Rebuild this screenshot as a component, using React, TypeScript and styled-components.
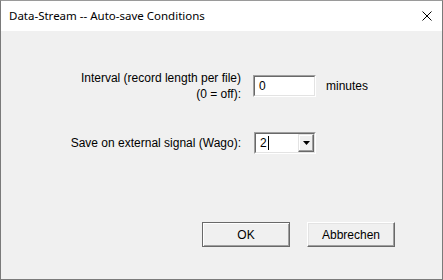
import React from 'react'
import styled, { createGlobalStyle } from 'styled-components'

const GlobalStyle = createGlobalStyle`
  html, body {
    margin: 0;
    padding: 0;
    background: #ffffff;
  }
`

const Window = styled.div`
  width: 443px;
  height: 280px;
  box-sizing: border-box;
  border: 1px solid #7a7a7a;
  border-top-color: #9a9a9a;
  display: flex;
  flex-direction: column;
  background: #f0f0f0;
  font-family: 'Liberation Sans', Arial, sans-serif;
  font-size: 12px;
  color: #000;
`

const TitleBar = styled.div`
  height: 30px;
  flex: none;
  background: #ffffff;
  display: flex;
  align-items: center;
  justify-content: space-between;
  padding: 0 10px 0 8px;
`

const Title = styled.span`
  font-family: 'Noto Sans', 'Open Sans', sans-serif;
  font-size: 11.5px;
  color: #000;
  margin-top: -1px;
`

const CloseIcon = styled.svg`
  width: 10px;
  height: 10px;
  display: block;
`

const Body = styled.div`
  flex: 1;
  display: flex;
  flex-direction: column;
  padding-top: 39px;
`

const Form = styled.div`
  display: grid;
  grid-template-columns: 240px auto auto;
  justify-content: start;
  column-gap: 12px;
  row-gap: 30px;
  align-items: center;
  justify-items: start;
`

const Label = styled.div`
  justify-self: end;
  text-align: right;
  line-height: 16px;
`

const Field = styled.div<{ $inset?: number }>`
  height: 22px;
  margin-left: ${p => p.$inset ?? 0}px;
  box-sizing: border-box;
  background: #ffffff;
  border: 1px solid;
  border-color: #a0a0a0 #ffffff #ffffff #a0a0a0;
  display: flex;
  align-items: stretch;
`

const FieldInner = styled.div<{ $w: number }>`
  width: ${p => p.$w}px;
  box-sizing: border-box;
  border: 1px solid;
  border-color: #696969 #e3e3e3 #e3e3e3 #696969;
  display: flex;
  align-items: stretch;
  font-size: 12px;
`

const Value = styled.span`
  flex: 1;
  display: flex;
  align-items: center;
  padding-left: 4px;
`

const Caret = styled.span`
  width: 1px;
  height: 14px;
  background: #000;
  margin-left: 1px;
`

const DropButton = styled.div`
  flex: none;
  width: 16px;
  box-sizing: border-box;
  background: #f0f0f0;
  border: 1px solid;
  border-color: #e3e3e3 #696969 #696969 #e3e3e3;
  box-shadow: inset -1px -1px 0 #a0a0a0, inset 1px 1px 0 #ffffff;
  display: flex;
  align-items: center;
  justify-content: center;
`

const Unit = styled.span`
  margin-left: -2px;
`

const ButtonRow = styled.div`
  display: flex;
  justify-content: flex-end;
  gap: 17px;
  padding-right: 47px;
  margin-top: 68px;
`

const Button = styled.div<{ $default?: boolean }>`
  width: 88px;
  height: 25px;
  box-sizing: border-box;
  display: flex;
  align-items: center;
  justify-content: center;
  background: #f0f0f0;
  border: 1px solid;
  border-color: ${p => (p.$default ? '#696969' : '#ffffff #696969 #696969 #ffffff')};
  box-shadow: ${p =>
    p.$default
      ? 'inset 1px 1px 0 #ffffff, inset -1px -1px 0 #a0a0a0'
      : 'inset -1px -1px 0 #a0a0a0, inset 1px 1px 0 #e3e3e3'};
  font-size: 12px;
`

export default function App() {
  return (
    <>
      <GlobalStyle />
      <Window>
        <TitleBar>
          <Title>Data-Stream -- Auto-save Conditions</Title>
          <CloseIcon viewBox="0 0 10 10">
            <path d="M0.5 0.5 L9.5 9.5 M9.5 0.5 L0.5 9.5" stroke="#000" strokeWidth="1" />
          </CloseIcon>
        </TitleBar>
        <Body>
          <Form>
            <Label>
              Interval (record length per file)
              <br />
              (0 = off):
            </Label>
            <Field>
              <FieldInner $w={61}>
                <Value>0</Value>
              </FieldInner>
            </Field>
            <Unit>minutes</Unit>

            <Label>Save on external signal (Wago):</Label>
            <Field $inset={1}>
              <FieldInner $w={60}>
                <Value>
                  2<Caret />
                </Value>
                <DropButton>
                  <svg width="7" height="4" viewBox="0 0 7 4">
                    <path d="M0 0 H7 L3.5 4 Z" fill="#000" />
                  </svg>
                </DropButton>
              </FieldInner>
            </Field>
            <span />
          </Form>
          <ButtonRow>
            <Button $default>OK</Button>
            <Button>Abbrechen</Button>
          </ButtonRow>
        </Body>
      </Window>
    </>
  )
}
